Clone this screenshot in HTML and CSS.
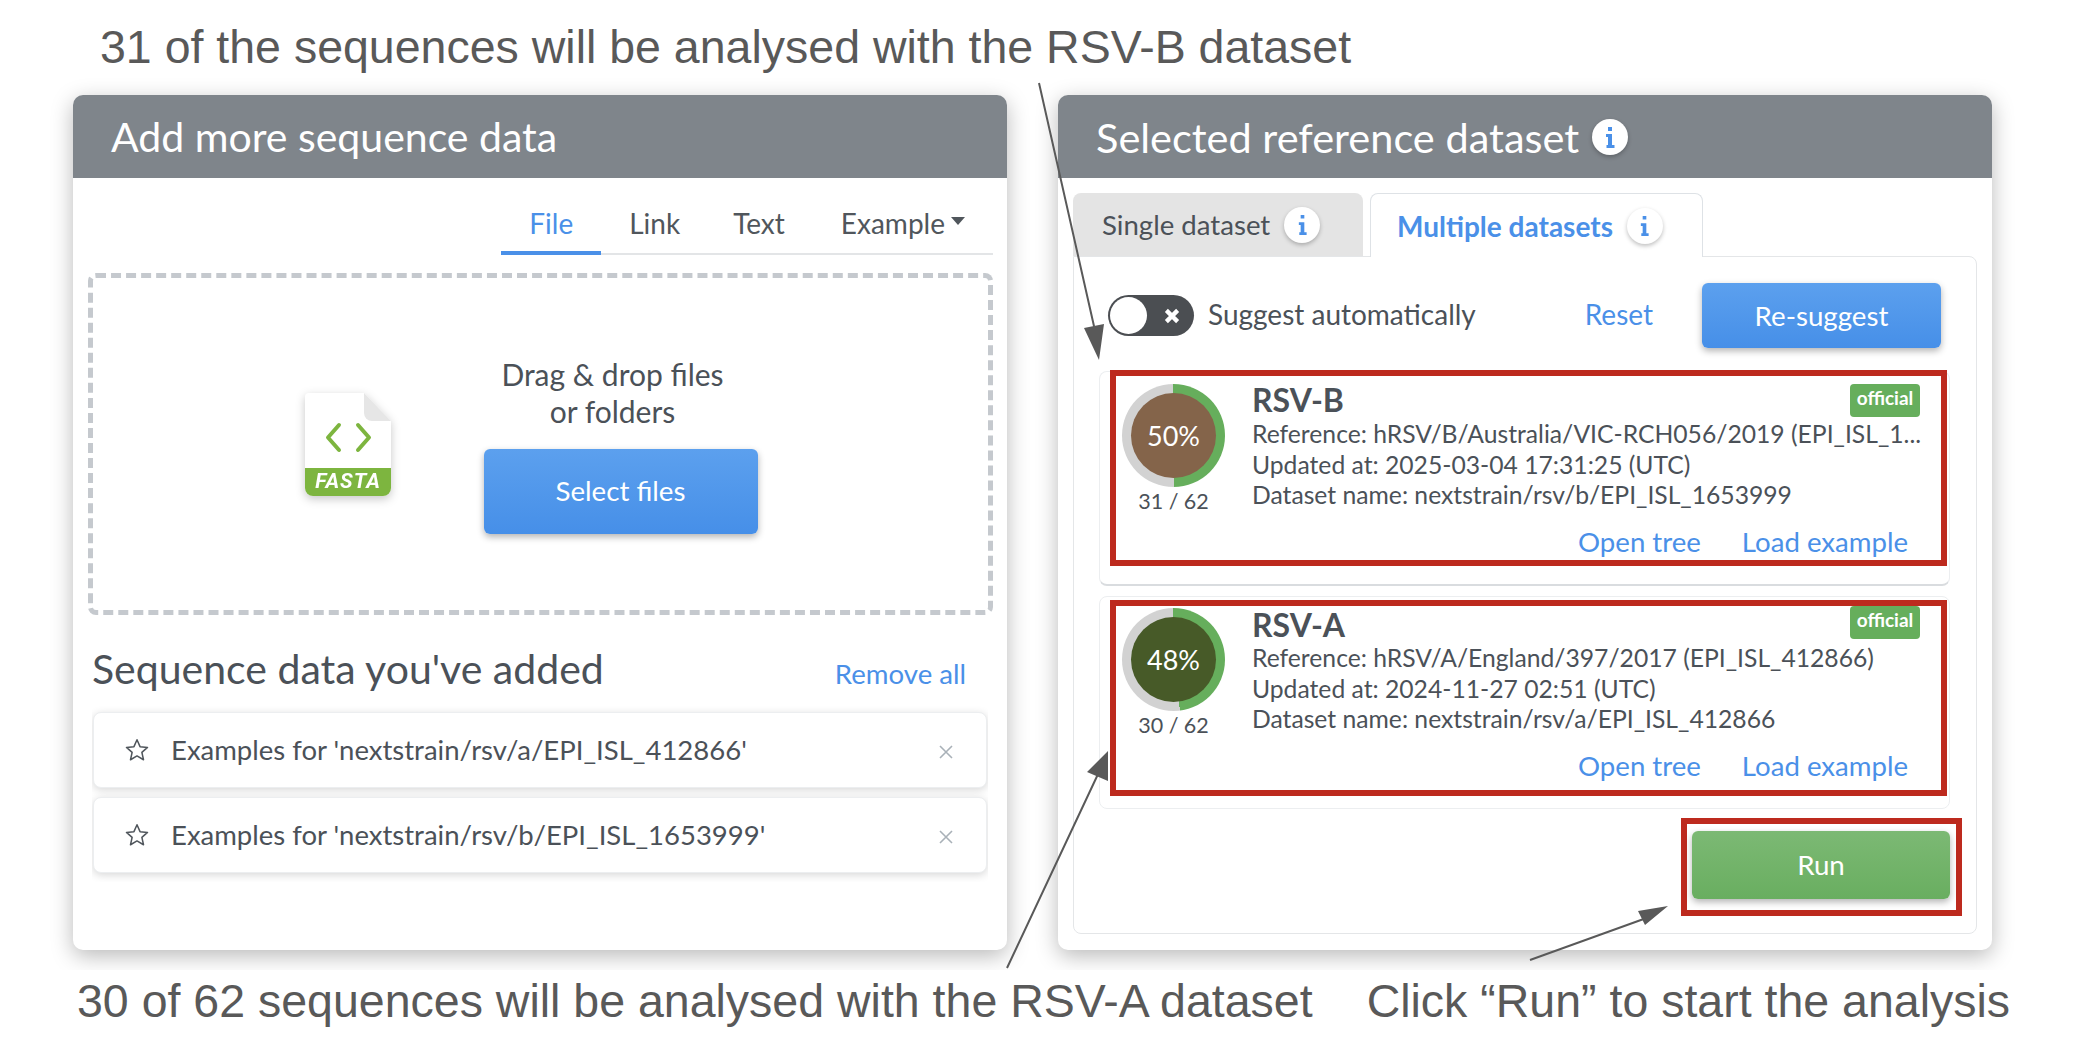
FILE: index.html
```html
<!DOCTYPE html>
<html lang="en">
  <head>
    <meta charset="UTF-8" />
    <meta name="viewport" content="width=device-width, initial-scale=1.0" />
    <title>Multiple datasets</title>
    <link rel="stylesheet" href="styles.css">
  </head>
  <body>
    <div class="page">
      <p class="caption caption-top">31 of the sequences will be analysed with the RSV-B dataset</p>

      <div class="panels">
        <section class="panel">
          <h2 class="panel-head">Add more sequence data</h2>
          <div class="panel-body-left">
            <nav class="source-tabs">
              <a class="source-tab active">File</a>
              <a class="source-tab">Link</a>
              <a class="source-tab">Text</a>
              <a class="source-tab">Example<span class="caret"></span></a>
            </nav>

            <div class="dropzone">
              <svg class="file-icon" width="92" height="112" viewBox="0 0 92 112">
                <path d="M7 3H62L89 31V98a8 8 0 0 1-8 8H11a8 8 0 0 1-8-8V7a4 4 0 0 1 4-4z" fill="#fff"/>
                <path d="M62 3L89 31H70a8 8 0 0 1-8-8z" fill="#e6e6e6"/>
                <path d="M3 78H89V98a8 8 0 0 1-8 8H11a8 8 0 0 1-8-8z" fill="#7db53f"/>
                <path d="M37 35L26 47.5L37 60M56 35L67 47.5L56 60" fill="none" stroke="#7db53f" stroke-width="4" stroke-linecap="round" stroke-linejoin="round"/>
                <text class="file-label" x="46" y="98" text-anchor="middle">FASTA</text>
              </svg>
              <div class="drop-col">
                <p class="drop-text">Drag &amp; drop files<br>or folders</p>
                <button class="btn btn-blue btn-select">Select files</button>
              </div>
            </div>

            <div class="added-head">
              <h3 class="added-title">Sequence data you've added</h3>
              <a class="link remove-all">Remove all</a>
            </div>

            <div class="added-list">
              <div class="added-row">
                <svg class="star" width="26" height="26" viewBox="0 0 24 24"><path d="M12 2.5l2.8 6.4 6.9.7-5.2 4.6 1.5 6.8-6-3.5-6 3.5 1.5-6.8-5.2-4.6 6.9-.7z" fill="none" stroke="#50565c" stroke-width="1.4" stroke-linejoin="round"/></svg>
                <span class="added-name">Examples for 'nextstrain/rsv/a/EPI_ISL_412866'</span>
                <svg class="close" width="16" height="16" viewBox="0 0 16 16"><path d="M2 2L14 14M14 2L2 14" stroke="#a9b1b8" stroke-width="1.6"/></svg>
              </div>
              <div class="added-row">
                <svg class="star" width="26" height="26" viewBox="0 0 24 24"><path d="M12 2.5l2.8 6.4 6.9.7-5.2 4.6 1.5 6.8-6-3.5-6 3.5 1.5-6.8-5.2-4.6 6.9-.7z" fill="none" stroke="#50565c" stroke-width="1.4" stroke-linejoin="round"/></svg>
                <span class="added-name">Examples for 'nextstrain/rsv/b/EPI_ISL_1653999'</span>
                <svg class="close" width="16" height="16" viewBox="0 0 16 16"><path d="M2 2L14 14M14 2L2 14" stroke="#a9b1b8" stroke-width="1.6"/></svg>
              </div>
            </div>
          </div>
        </section>

        <section class="panel">
          <h2 class="panel-head panel-head-right">
            Selected reference dataset
            <span class="info info-head"><svg width="12" height="24" viewBox="0 0 12 24"><path d="M4 2h4v4H4zM2 9h6v11h2.5v3h-8v-3H4v-8H2z" fill="#4a90e8"/></svg></span>
          </h2>
          <div class="panel-body-right">
            <div class="mode-tabs">
              <div class="mode-tab">Single dataset
                <span class="info"><svg width="11" height="24" viewBox="0 0 12 24"><path d="M4 1h4v4H4zM2 9h6v11h2.5v3h-8v-3H4v-8H2z" fill="#4a90e8"/></svg></span>
              </div>
              <div class="mode-tab active">Multiple datasets
                <span class="info"><svg width="11" height="24" viewBox="0 0 12 24"><path d="M4 1h4v4H4zM2 9h6v11h2.5v3h-8v-3H4v-8H2z" fill="#4a90e8"/></svg></span>
              </div>
            </div>

            <div class="mode-body">
              <div class="suggest-bar">
                <span class="toggle">
                  <span class="knob"></span>
                  <svg width="20" height="20" viewBox="0 0 16 16"><path d="M3.5 3.5L12.5 12.5M12.5 3.5L3.5 12.5" stroke="#fff" stroke-width="3.4"/></svg>
                </span>
                <span class="suggest-label">Suggest automatically</span>
                <a class="link reset">Reset</a>
                <button class="btn btn-blue btn-suggest">Re-suggest</button>
              </div>

              <article class="dataset">
                <div class="dataset-stat">
                  <div class="ring ring-50"><span class="ring-core core-brown">50%</span></div>
                  <div class="ring-count">31 / 62</div>
                </div>
                <div class="dataset-info">
                  <div class="dataset-name">RSV-B</div>
                  <span class="badge">official</span>
                  <div class="dataset-line">Reference: hRSV/B/Australia/VIC-RCH056/2019 (EPI_ISL_1...</div>
                  <div class="dataset-line">Updated at: 2025-03-04 17:31:25 (UTC)</div>
                  <div class="dataset-line">Dataset name: nextstrain/rsv/b/EPI_ISL_1653999</div>
                  <div class="dataset-links"><a class="link">Open tree</a><a class="link">Load example</a></div>
                </div>
                <div class="red-box"></div>
              </article>

              <article class="dataset dataset-second">
                <div class="dataset-stat">
                  <div class="ring ring-48"><span class="ring-core core-green">48%</span></div>
                  <div class="ring-count">30 / 62</div>
                </div>
                <div class="dataset-info">
                  <div class="dataset-name">RSV-A</div>
                  <span class="badge">official</span>
                  <div class="dataset-line">Reference: hRSV/A/England/397/2017 (EPI_ISL_412866)</div>
                  <div class="dataset-line">Updated at: 2024-11-27 02:51 (UTC)</div>
                  <div class="dataset-line">Dataset name: nextstrain/rsv/a/EPI_ISL_412866</div>
                  <div class="dataset-links"><a class="link">Open tree</a><a class="link">Load example</a></div>
                </div>
                <div class="red-box"></div>
              </article>

              <div class="run-wrap">
                <button class="btn btn-green btn-run">Run</button>
              </div>
            </div>
          </div>
        </section>
      </div>

      <div class="captions-bottom">
        <p class="caption">30 of 62 sequences will be analysed with the RSV-A dataset</p>
        <p class="caption">Click “Run” to start the analysis</p>
      </div>

      <!-- annotation arrows -->
      <svg class="arrows" width="2094" height="1056" viewBox="0 0 2094 1056">
        <path d="M1039 83L1096 335M1007 968L1099 772M1530 960L1652 916" stroke="#595959" stroke-width="2" fill="none"/>
        <path d="M1099 360L1084 328L1104 324zM1108 751L1108 781L1087 772zM1668 906L1645 925L1638 911z" fill="#595959"/>
      </svg>
    </div>
  </body>
</html>
```

FILE: styles.css
```css
* {
  box-sizing: border-box;
}

body {
  margin: 0;
  background: #fff;
  font-family: "Lato", sans-serif;
  color: #4b5158;
}

.page {
  position: relative;
  width: 2094px;
  height: 1056px;
  overflow: hidden;
}

.caption {
  margin: 0;
  font-family: "Liberation Sans", Arial, sans-serif;
  font-size: 46.5px;
  line-height: 52px;
  color: #595959;
  white-space: nowrap;
}

.caption-top {
  height: 95px;
  padding: 21px 0 0 100px;
}

.panels {
  display: flex;
  gap: 51px;
  padding-left: 73px;
}

.panel {
  width: 934px;
  height: 855px;
  background: #fff;
  border-radius: 10px;
  box-shadow: 0 6px 22px rgba(0, 0, 0, 0.28);
  overflow: hidden;
}

.panel-head {
  display: flex;
  align-items: center;
  gap: 13px;
  height: 83px;
  margin: 0;
  padding-left: 38px;
  background: #7f858b;
  color: #fff;
  font-size: 41px;
  font-weight: 400;
}

.panel-head-right {
  font-size: 41.5px;
}

.panel-body-left {
  padding: 0 14px 0 15px;
}

.source-tabs {
  display: flex;
  width: fit-content;
  margin-left: auto;
  height: 77px;
  border-bottom: 2px solid #e3e5e7;
}

.source-tab {
  display: flex;
  align-items: center;
  height: 77px;
  padding: 12px 28px 0;
  font-size: 28px;
  color: #50565c;
}

.source-tab:nth-child(3) {
  padding-left: 25px;
}

.source-tab.active {
  color: #4a90e8;
  border-bottom: 4px solid #4a90e8;
  padding-top: 16px;
}

.caret {
  display: inline-block;
  margin: 0 0 4px 6px;
  border-top: 8px solid #50565c;
  border-left: 7.5px solid transparent;
  border-right: 7.5px solid transparent;
}

.dropzone {
  display: flex;
  align-items: center;
  justify-content: center;
  gap: 90px;
  height: 342px;
  margin-top: 18px;
  padding-right: 22px;
  border: 5px dashed #c5c9ce;
  border-radius: 8px;
}

.file-icon {
  margin-top: 4px;
  filter: drop-shadow(0 3px 5px rgba(0, 0, 0, 0.22));
}

.file-label {
  font-family: "Roboto", sans-serif;
  font-size: 21px;
  font-weight: 700;
  font-style: italic;
  letter-spacing: 1px;
  fill: #fff;
}

.drop-col {
  display: flex;
  flex-direction: column;
  width: 274px;
  margin-top: 2px;
}

.drop-text {
  margin: 0 16px 19px 0;
  font-size: 30px;
  line-height: 37px;
  text-align: center;
  white-space: nowrap;
}

.btn {
  border: none;
  border-radius: 6px;
  color: #fff;
  font-family: "Lato", sans-serif;
  font-size: 27.7px;
  box-shadow: 0 3px 7px rgba(0, 0, 0, 0.3);
}

.btn-blue {
  background: linear-gradient(180deg, #5ca0ee 0%, #468fe8 100%);
}

.btn-green {
  background: linear-gradient(180deg, #7cb974 0%, #69ae60 100%);
}

.btn-select {
  height: 85px;
  padding-bottom: 3px;
}

.added-head {
  display: flex;
  align-items: baseline;
  justify-content: space-between;
  margin-top: 30px;
  padding: 0 27px 0 4px;
}

.added-title {
  margin: 0;
  font-size: 41px;
  font-weight: 400;
  line-height: 48px;
}

.link {
  color: #4a90e8;
}

.remove-all {
  font-size: 27.6px;
}

.added-list {
  display: flex;
  flex-direction: column;
  gap: 9px;
  margin: 10px 5px 0 4px;
  padding: 9px 1px;
  overflow: hidden;
}

.added-row {
  display: flex;
  align-items: center;
  height: 76px;
  flex: none;
  padding: 0 32px 0 30px;
  border: 1px solid #eceef0;
  border-radius: 8px;
  background: #fff;
  box-shadow: 0 2px 8px rgba(0, 0, 0, 0.16);
}

.star {
  margin-right: 21px;
  flex: none;
}

.added-name {
  flex: 1;
  padding-bottom: 2px;
  font-size: 27.5px;
  white-space: nowrap;
}

.close {
  margin-top: 4px;
}

.panel-body-right {
  padding: 15px 15px 0;
}

.mode-tabs {
  display: flex;
  gap: 7px;
}

.mode-tab {
  display: flex;
  align-items: center;
  gap: 14px;
  height: 63px;
  padding: 0 29px;
  border-radius: 8px 8px 0 0;
  background: #e4e4e4;
  font-size: 27.6px;
}

.mode-tab:first-child {
  width: 290px;
}

.mode-tab.active {
  position: relative;
  width: 333px;
  height: 64px;
  margin-bottom: -1px;
  padding: 0 26px;
  background: #fff;
  border: 1px solid #dee2e6;
  border-bottom: none;
  color: #4a90e8;
  font-size: 28px;
  font-weight: 700;
}

.info {
  display: inline-flex;
  align-items: center;
  justify-content: center;
  width: 36px;
  height: 36px;
  border-radius: 50%;
  background: #fff;
  box-shadow: 0 2px 4px rgba(0, 0, 0, 0.25);
}

.mode-body {
  display: flex;
  flex-direction: column;
  height: 678px;
  padding: 0 26px 0 25px;
  border: 1px solid #e4e6e8;
  border-radius: 0 8px 8px 8px;
}

.suggest-bar {
  display: flex;
  align-items: center;
  height: 65px;
  margin-top: 26px;
  padding-left: 9px;
  font-size: 28px;
}

.toggle {
  position: relative;
  display: flex;
  align-items: center;
  justify-content: flex-end;
  width: 86px;
  height: 41px;
  padding-right: 12px;
  border-radius: 21px;
  background: #4b4e52;
}

.knob {
  position: absolute;
  left: 2px;
  top: 2px;
  width: 37px;
  height: 37px;
  border-radius: 50%;
  background: #fff;
}

.suggest-label {
  margin-left: 14px;
  padding-bottom: 3px;
}

.reset {
  margin-left: auto;
  margin-right: 49px;
  padding-bottom: 3px;
}

.btn-suggest {
  width: 239px;
  height: 65px;
  margin-right: 9px;
}

.dataset {
  position: relative;
  display: flex;
  height: 215px;
  margin-top: 23px;
  padding: 11px 29px 0 22px;
  border: 1px solid #eceef0;
  border-bottom: 2px solid #d9dcdf;
  border-radius: 8px;
}

.dataset-second {
  height: 213px;
  margin-top: 10px;
  border-bottom-width: 1px;
  border-bottom-color: #eceef0;
}

.dataset-stat {
  width: 103px;
  flex: none;
  padding-top: 1px;
  text-align: center;
}

.dataset-second .dataset-stat {
  padding-top: 0;
}

.ring {
  display: flex;
  align-items: center;
  justify-content: center;
  width: 103px;
  height: 103px;
  border-radius: 50%;
}

.ring-50 {
  background: conic-gradient(#66ae5c 0 50%, #d2d2d2 50% 100%);
}

.ring-48 {
  background: conic-gradient(#66ae5c 0 48%, #d2d2d2 48% 100%);
}

.ring-core {
  display: flex;
  align-items: center;
  justify-content: center;
  width: 85px;
  height: 85px;
  border-radius: 50%;
  color: #fff;
  font-size: 27px;
}

.core-brown {
  background: #84644a;
}

.core-green {
  background: #475a28;
}

.ring-count {
  margin-top: 1px;
  font-size: 21.5px;
  line-height: 26px;
  white-space: nowrap;
}

.dataset-info {
  position: relative;
  flex: 1;
  min-width: 0;
  margin-left: 27px;
}

.dataset-name {
  height: 36px;
  font-size: 32px;
  font-weight: 700;
  line-height: 33px;
}

.dataset-second .dataset-name {
  height: 35px;
}

.badge {
  position: absolute;
  right: 0;
  top: 1px;
  width: 70px;
  height: 33px;
  padding-top: 2px;
  border-radius: 4px;
  background: #66ae5c;
  color: #fff;
  font-size: 19px;
  font-weight: 700;
  text-align: center;
}

.dataset-second .badge {
  top: -2px;
}

.dataset-line {
  font-size: 24.7px;
  line-height: 30.5px;
  white-space: nowrap;
}

.dataset-links {
  display: flex;
  justify-content: flex-end;
  gap: 41px;
  margin-top: 14px;
  padding-right: 12px;
  font-size: 27.6px;
}

.dataset-second .dataset-links {
  margin-top: 14px;
}

.red-box {
  position: absolute;
  left: 10px;
  right: 2px;
  top: -2px;
  height: 196px;
  border: 6px solid #bd2a1e;
}

.dataset-second .red-box {
  top: 3px;
}

.run-wrap {
  align-self: flex-end;
  width: 281px;
  height: 98px;
  margin: 9px -12px 0 0;
  padding: 7px 6px 0 5px;
  border: 6px solid #bd2a1e;
}

.btn-run {
  width: 100%;
  height: 68px;
  padding-bottom: 3px;
}

.captions-bottom {
  position: relative;
  display: flex;
  gap: 54px;
  height: 86px;
  margin-top: 20px;
  padding: 5px 0 0 77px;
  background: #fff;
}

.arrows {
  position: absolute;
  left: 0;
  top: 0;
  pointer-events: none;
}
```
